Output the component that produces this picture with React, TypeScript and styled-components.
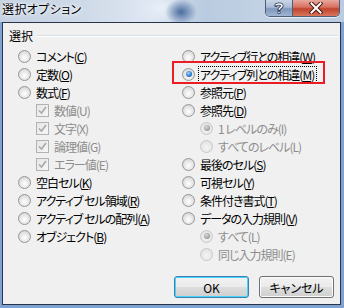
import React from "react";
import styled, { createGlobalStyle, css } from "styled-components";

const Global = createGlobalStyle`
  html, body { margin: 0; padding: 0; background: #ffffff; }
  body { font-family: "Noto Sans CJK JP", "Noto Sans", sans-serif; }
`;

const Window = styled.div`
  width: 344px;
  height: 308px;
  display: flex;
  flex-direction: column;
  background: #7ea3d3;
  overflow: hidden;
`;

const TitleBar = styled.div`
  height: 22px;
  flex: none;
  display: flex;
  align-items: flex-start;
  padding: 0 4px 0 2px;
  background:
    radial-gradient(ellipse 16px 13px at 181px 12px, rgba(60, 96, 150, 0.9), rgba(60, 96, 150, 0) 100%),
    radial-gradient(ellipse 26px 22px at 160px 8px, rgba(240, 245, 252, 0.8), rgba(240, 245, 252, 0) 100%),
    linear-gradient(90deg, #c4d1e2 0%, #cfdae8 25%, #dbe4f0 40%, #b9cbe0 60%, #c2d1e4 75%, #bccce0 100%);
`;

const Title = styled.div`
  flex: 1;
  font-size: 12px;
  line-height: 18px;
  color: #000;
  font-feature-settings: "palt";
  letter-spacing: 0.4px;
  text-shadow: 0 0 6px #ffffff, 0 0 3px #ffffff;
`;

const CaptionGroup = styled.div`
  display: flex;
  height: 16px;
  border: 1px solid #4d5e78;
  border-top: none;
  border-radius: 0 0 5px 5px;
  overflow: hidden;
  box-shadow: 0 1px 0 rgba(255, 255, 255, 0.6);
`;

const CaptionButton = styled.div<{ $variant: "help" | "close" }>`
  display: flex;
  align-items: center;
  justify-content: center;
  ${(p) =>
    p.$variant === "help"
      ? css`
          width: 26px;
          background: linear-gradient(180deg, #c9d6e8 0%, #a9bcd6 45%, #7e97bb 55%, #9fb5d4 100%);
          border-right: 1px solid #4d5e78;
        `
      : css`
          width: 46px;
          background: linear-gradient(180deg, #e8a99d 0%, #d7705f 45%, #c0432d 55%, #d7765c 100%);
        `}
`;

const Client = styled.div`
  flex: 1;
  margin: 0 3px 3px 2px;
  border: 1px solid #27344a;
  background: #f0f0f0;
  display: flex;
  flex-direction: column;
  font-size: 12px;
  color: #000;
`;

const GroupHeader = styled.div`
  display: flex;
  align-items: center;
  gap: 4px;
  padding: 6px 2px 0 6px;
  height: 14px;
  line-height: 14px;
  font-feature-settings: "palt";
`;

const GroupLine = styled.div`
  flex: 1;
  height: 0;
  border-top: 1px solid #d5dfe5;
  border-bottom: 1px solid #ffffff;
`;

const Columns = styled.div`
  display: grid;
  grid-template-columns: 164px 1fr;
  padding: 4px 0 0 15px;
`;

const Column = styled.div`
  display: flex;
  flex-direction: column;
`;

const Row = styled.div<{ $indent?: boolean; $highlight?: boolean }>`
  position: relative;
  height: 18px;
  display: flex;
  align-items: center;
  padding-left: ${(p) => (p.$indent ? 18 : 0)}px;
  ${(p) =>
    p.$highlight &&
    css`
      &::after {
        content: "";
        position: absolute;
        left: -10px;
        top: -4px;
        width: 153px;
        height: 23px;
        border: 2px solid #ec1c24;
        box-sizing: border-box;
      }
    `}
`;

const RadioCircle = styled.span<{ $checked?: boolean; $disabled?: boolean }>`
  position: relative;
  flex: none;
  width: 13px;
  height: 13px;
  box-sizing: border-box;
  border-radius: 50%;
  border: 1px solid ${(p) => (p.$disabled ? "#c8c8c8" : "#979797")};
  background: ${(p) =>
    p.$disabled
      ? "radial-gradient(circle at 50% 60%, #f4f4f4 0%, #e8e8e8 55%, #dcdcdc 100%)"
      : "radial-gradient(circle at 50% 60%, #ffffff 0%, #e4e4e4 55%, #c8c8c8 100%)"};
  ${(p) =>
    p.$checked &&
    css`
      &::after {
        content: "";
        position: absolute;
        left: 2.5px;
        top: 2.5px;
        width: 6px;
        height: 6px;
        border-radius: 50%;
        background: ${p.$disabled
          ? "radial-gradient(circle at 40% 35%, #d9d9d9 0%, #9b9b9b 70%, #8a8a8a 100%)"
          : "radial-gradient(circle at 40% 35%, #9fd6ff 0%, #2f7fd0 55%, #124a8e 100%)"};
      }
    `}
`;

const CheckBox = styled.span<{ $disabled?: boolean }>`
  flex: none;
  width: 13px;
  height: 13px;
  box-sizing: border-box;
  border: 1px solid ${(p) => (p.$disabled ? "#b2b2b2" : "#8e8f8f")};
  background: linear-gradient(135deg, #e6e6e6 0%, #f6f6f6 100%);
  display: flex;
  align-items: center;
  justify-content: center;
`;

const Label = styled.span<{ $disabled?: boolean; $focused?: boolean }>`
  margin-left: 4px;
  white-space: nowrap;
  font-feature-settings: "palt";
  letter-spacing: -1px;
  line-height: 15px;
  color: ${(p) => (p.$disabled ? "#8d8d8d" : "#000000")};
  padding: 0 2px 0 1px;
  ${(p) =>
    p.$focused &&
    css`
      outline: 1px dotted #000;
      outline-offset: 0;
    `}
  u {
    text-decoration: underline;
    text-underline-offset: 1px;
  }
`;

const ButtonRow = styled.div`
  margin-top: auto;
  display: flex;
  justify-content: flex-end;
  gap: 10px;
  padding: 0 6px 6px 0;
`;

const Button = styled.button<{ $default?: boolean }>`
  width: 75px;
  height: 22px;
  box-sizing: border-box;
  font-family: "Noto Sans CJK JP", sans-serif;
  font-size: 12px;
  font-feature-settings: "palt";
  color: #000;
  border-radius: 3px;
  padding: 0;
  border: 1px solid ${(p) => (p.$default ? "#3c7fb1" : "#707070")};
  background: linear-gradient(180deg, #f2f2f2 0%, #ebebeb 48%, #dddddd 52%, #cfcfcf 100%);
  box-shadow: inset 0 0 0 1px ${(p) => (p.$default ? "#48d3fb" : "#fbfbfb")};
`;

type Item = {
  kind: "radio" | "check";
  label: string;
  key: string;
  indent?: boolean;
  disabled?: boolean;
  checked?: boolean;
  focused?: boolean;
  highlight?: boolean;
};

const left: Item[] = [
  { kind: "radio", label: "コメント", key: "C" },
  { kind: "radio", label: "定数", key: "O" },
  { kind: "radio", label: "数式", key: "F" },
  { kind: "check", label: "数値", key: "U", indent: true, disabled: true, checked: true },
  { kind: "check", label: "文字", key: "X", indent: true, disabled: true, checked: true },
  { kind: "check", label: "論理値", key: "G", indent: true, disabled: true, checked: true },
  { kind: "check", label: "エラー値", key: "E", indent: true, disabled: true, checked: true },
  { kind: "radio", label: "空白セル", key: "K" },
  { kind: "radio", label: "アクティブ セル領域", key: "R" },
  { kind: "radio", label: "アクティブ セルの配列", key: "A" },
  { kind: "radio", label: "オブジェクト", key: "B" },
];

const right: Item[] = [
  { kind: "radio", label: "アクティブ行との相違", key: "W" },
  { kind: "radio", label: "アクティブ列との相違", key: "M", checked: true, focused: true, highlight: true },
  { kind: "radio", label: "参照元", key: "P" },
  { kind: "radio", label: "参照先", key: "D" },
  { kind: "radio", label: "1 レベルのみ", key: "I", indent: true, disabled: true, checked: true },
  { kind: "radio", label: "すべてのレベル", key: "L", indent: true, disabled: true },
  { kind: "radio", label: "最後のセル", key: "S" },
  { kind: "radio", label: "可視セル", key: "Y" },
  { kind: "radio", label: "条件付き書式", key: "T" },
  { kind: "radio", label: "データの入力規則", key: "V" },
  { kind: "radio", label: "すべて", key: "L", indent: true, disabled: true, checked: true },
  { kind: "radio", label: "同じ入力規則", key: "E", indent: true, disabled: true },
];

const CheckMark = ({ disabled }: { disabled?: boolean }) => (
  <svg width="9" height="9" viewBox="0 0 9 9">
    <path d="M1 4.5 L3.5 7 L8 1" fill="none" stroke={disabled ? "#a8a8a8" : "#4d6185"} strokeWidth="1.6" />
  </svg>
);

const OptionRow = ({ item }: { item: Item }) => (
  <Row $indent={item.indent} $highlight={item.highlight}>
    {item.kind === "radio" ? (
      <RadioCircle $checked={item.checked} $disabled={item.disabled} />
    ) : (
      <CheckBox $disabled={item.disabled}>{item.checked && <CheckMark disabled={item.disabled} />}</CheckBox>
    )}
    <Label $disabled={item.disabled} $focused={item.focused}>
      {item.label}(
      {item.disabled ? item.key : <u>{item.key}</u>})
    </Label>
  </Row>
);

const HelpGlyph = () => (
  <svg width="10" height="12" viewBox="0 0 10 12">
    <path
      d="M2 3.5 C2 1.5 8 1.5 8 3.8 C8 5.6 5 5.6 5 7.8"
      fill="none"
      stroke="#2c3a52"
      strokeWidth="3.2"
      strokeLinecap="round"
    />
    <path d="M2 3.5 C2 1.5 8 1.5 8 3.8 C8 5.6 5 5.6 5 7.8" fill="none" stroke="#ffffff" strokeWidth="1.6" />
    <rect x="3.6" y="9" width="2.8" height="2.8" fill="#2c3a52" />
    <rect x="4.3" y="9.7" width="1.4" height="1.4" fill="#ffffff" />
  </svg>
);

const CloseGlyph = () => (
  <svg width="14" height="12" viewBox="0 0 14 12">
    <path d="M2.5 1.5 L11.5 10.5 M11.5 1.5 L2.5 10.5" stroke="#4a1a12" strokeWidth="4" strokeLinecap="square" />
    <path d="M2.5 1.5 L11.5 10.5 M11.5 1.5 L2.5 10.5" stroke="#ffffff" strokeWidth="2" strokeLinecap="square" />
  </svg>
);

export default function App() {
  return (
    <>
      <Global />
      <Window>
        <TitleBar>
          <Title>選択オプション</Title>
          <CaptionGroup>
            <CaptionButton $variant="help">
              <HelpGlyph />
            </CaptionButton>
            <CaptionButton $variant="close">
              <CloseGlyph />
            </CaptionButton>
          </CaptionGroup>
        </TitleBar>
        <Client>
          <GroupHeader>
            <span>選択</span>
            <GroupLine />
          </GroupHeader>
          <Columns>
            <Column>
              {left.map((it, i) => (
                <OptionRow key={i} item={it} />
              ))}
            </Column>
            <Column>
              {right.map((it, i) => (
                <OptionRow key={i} item={it} />
              ))}
            </Column>
          </Columns>
          <ButtonRow>
            <Button $default>OK</Button>
            <Button>キャンセル</Button>
          </ButtonRow>
        </Client>
      </Window>
    </>
  );
}
